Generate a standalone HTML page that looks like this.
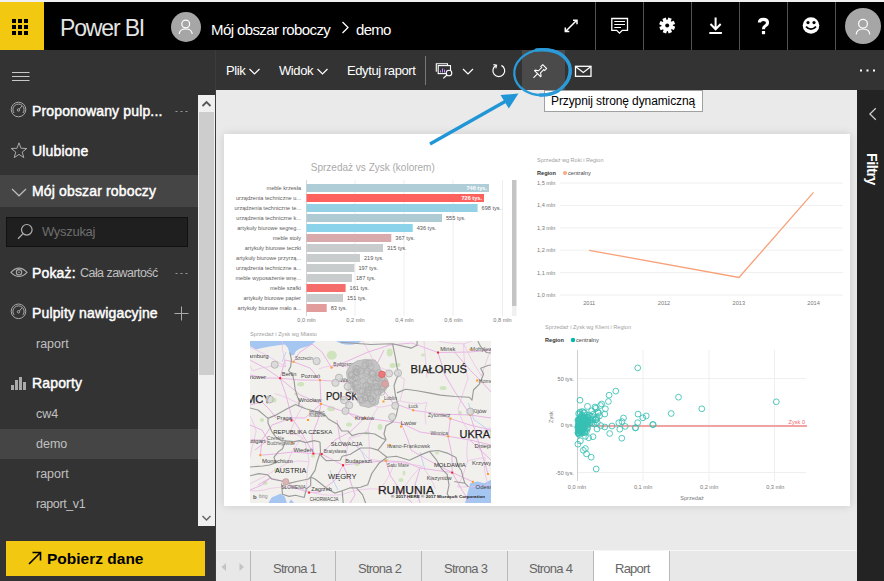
<!DOCTYPE html>
<html><head><meta charset="utf-8">
<style>
*{margin:0;padding:0;box-sizing:border-box}
html,body{width:884px;height:581px;overflow:hidden;background:#eaeaea;font-family:"Liberation Sans",sans-serif}
.a{position:absolute}
.t{position:absolute;white-space:nowrap}
.sq{position:absolute;width:4px;height:4px;background:#000}
.sep{position:absolute;top:2px;width:1px;height:48px;background:#505050}
.side-t{color:#fff;font-size:14px;line-height:16px;letter-spacing:0.15px;-webkit-text-stroke:0.45px #fff}
.sub-t{color:#c0c0c0;font-size:12.5px;line-height:14px}
.tb-t{color:#fff;font-size:13px;line-height:16px;letter-spacing:-0.4px}
.tab-t{color:#666;font-size:13px;line-height:16px;letter-spacing:-0.75px}
svg{position:absolute;left:0;top:0}
</style></head><body>
<div class="a" style="left:0;top:0;width:884px;height:2px;background:#f0f0f0"></div>
<div class="a" style="left:0;top:2px;width:884px;height:48px;background:#000"></div>
<div class="a" style="left:0;top:2px;width:44px;height:48px;background:#f2c811"></div>
<div class="sq" style="left:12px;top:19px"></div>
<div class="sq" style="left:18px;top:19px"></div>
<div class="sq" style="left:24px;top:19px"></div>
<div class="sq" style="left:12px;top:25px"></div>
<div class="sq" style="left:18px;top:25px"></div>
<div class="sq" style="left:24px;top:25px"></div>
<div class="sq" style="left:12px;top:31px"></div>
<div class="sq" style="left:18px;top:31px"></div>
<div class="sq" style="left:24px;top:31px"></div>
<div class="t" style="left:60px;top:14px;color:#e4e4e4;font-size:23px;line-height:28px;letter-spacing:-1.15px">Power BI</div>
<div class="a" style="left:171px;top:12px;width:30px;height:30px;border-radius:50%;background:#a6a6a6"></div>
<div class="t" style="left:211px;top:20.5px;color:#fff;font-size:15px;line-height:18px;letter-spacing:-0.6px">Mój obszar roboczy</div>
<div class="t" style="left:356px;top:20.5px;color:#fff;font-size:15px;line-height:18px;letter-spacing:-0.7px">demo</div>
<div class="sep" style="left:595px"></div>
<div class="sep" style="left:643px"></div>
<div class="sep" style="left:691px"></div>
<div class="sep" style="left:739px"></div>
<div class="sep" style="left:787px"></div>
<div class="sep" style="left:835px"></div>
<div class="a" style="left:845px;top:8px;width:36px;height:36px;border-radius:50%;background:#a6a6a6"></div>
<div class="a" style="left:0;top:50px;width:216px;height:531px;background:#333"></div>
<div class="a" style="left:216px;top:50px;width:668px;height:40px;background:#333"></div>
<div class="a" style="left:215px;top:50px;width:1px;height:531px;background:#3c3c3c"></div>
<div class="a" style="left:857px;top:90px;width:27px;height:491px;background:#232323"></div>
<div class="a" style="left:216px;top:550px;width:641px;height:31px;background:#e8e8e8;border-top:1px solid #f6f6f6"></div>
<div class="a" style="left:224px;top:134px;width:626px;height:372px;background:#fff;box-shadow:0 0 9px rgba(0,0,0,.13)"></div>
<div class="a" style="left:0;top:175px;width:198px;height:32px;background:#454545"></div>
<div class="a" style="left:0;top:429px;width:198px;height:30px;background:#454545"></div>
<div class="t side-t" style="left:32px;top:103px">Proponowany pulp...</div>
<div class="t side-t" style="left:32px;top:143px">Ulubione</div>
<div class="t side-t" style="left:32px;top:183px">Mój obszar roboczy</div>
<div class="a" style="left:6px;top:217px;width:182px;height:30px;background:#1f1f1f;border:1px solid #111"></div>
<div class="t" style="left:42px;top:224px;color:#6e6e6e;font-size:13px;line-height:16px;letter-spacing:-0.3px">Wyszukaj</div>
<div class="t side-t" style="left:32px;top:265px">Pokaż:</div>
<div class="t sub-t" style="left:80px;top:266px;letter-spacing:-0.55px">Cała zawartość</div>
<div class="t side-t" style="left:32px;top:305px">Pulpity nawigacyjne</div>
<div class="t sub-t" style="left:36px;top:337px">raport</div>
<div class="t side-t" style="left:32px;top:375px">Raporty</div>
<div class="t sub-t" style="left:36px;top:407px">cw4</div>
<div class="t sub-t" style="left:36px;top:437px">demo</div>
<div class="t sub-t" style="left:36px;top:467px">raport</div>
<div class="t sub-t" style="left:36px;top:497px;letter-spacing:-0.4px">raport_v1</div>
<div class="a" style="left:198px;top:95px;width:17px;height:431px;background:#f0f0f0"></div>
<div class="a" style="left:199px;top:112px;width:15px;height:263px;background:#cdcdcd"></div>
<div class="a" style="left:6px;top:541px;width:199px;height:35px;background:#f2c811"></div>
<div class="t" style="left:47px;top:550px;color:#000;font-weight:bold;font-size:15.5px;line-height:18px">Pobierz dane</div>
<div class="t tb-t" style="left:226px;top:63px">Plik</div>
<div class="t tb-t" style="left:279px;top:63px">Widok</div>
<div class="t tb-t" style="left:347px;top:63px">Edytuj raport</div>
<div class="a" style="left:425px;top:56px;width:1px;height:29px;background:#777"></div>
<div class="a" style="left:522px;top:50px;width:43px;height:40px;background:#4a4a4a"></div>
<div class="a" style="left:594px;top:551px;width:75px;height:30px;background:#fff"></div>
<div class="a" style="left:250px;top:551px;width:1px;height:30px;background:#b8b8b8"></div>
<div class="a" style="left:335px;top:551px;width:1px;height:30px;background:#b8b8b8"></div>
<div class="a" style="left:421px;top:551px;width:1px;height:30px;background:#b8b8b8"></div>
<div class="a" style="left:507px;top:551px;width:1px;height:30px;background:#b8b8b8"></div>
<div class="a" style="left:593px;top:551px;width:1px;height:30px;background:#b8b8b8"></div>
<div class="a" style="left:669px;top:551px;width:1px;height:30px;background:#b8b8b8"></div>
<div class="t tab-t" style="left:273px;top:560.5px">Strona 1</div>
<div class="t tab-t" style="left:358px;top:560.5px">Strona 2</div>
<div class="t tab-t" style="left:444px;top:560.5px">Strona 3</div>
<div class="t tab-t" style="left:529px;top:560.5px">Strona 4</div>
<div class="t tab-t" style="left:615px;top:560.5px">Raport</div>
<div class="a" style="left:544px;top:89.5px;width:159px;height:22px;background:#fff;border:1px solid #a0a0a0"></div>
<div class="t" style="left:551px;top:94px;color:#000;font-size:12px;line-height:14px;letter-spacing:-0.1px">Przypnij stronę dynamiczną</div>
<div class="t" style="left:864px;top:153px;color:#fff;font-weight:bold;font-size:14px;line-height:16px;letter-spacing:-0.4px;transform-origin:0 0;transform:translate(16px,0) rotate(90deg)">Filtry</div>
<svg width="884" height="581" viewBox="0 0 884 581" font-family="Liberation Sans"><circle cx="185.7" cy="24" r="3.9" fill="none" stroke="#fff" stroke-width="1.2"/><path d="M179.2 34 Q179.5 29 185.7 29 Q191.9 29 192.2 34" fill="none" stroke="#fff" stroke-width="1.2"/><path d="M342.5 22 L348 27.5 L342.5 33" fill="none" stroke="#fff" stroke-width="1.3"/><path d="M565.5 31.5 L577 20 M573 20.2 H577 V24.2 M565.3 27.6 V31.6 H569.3" fill="none" stroke="#fff" stroke-width="1.5"/><path d="M611.8 18.5 H627.5 V30.3 H622.3 L619.5 33.1 L616.7 30.3 H611.8 Z" fill="none" stroke="#fff" stroke-width="1.3"/><path d="M614.3 21.5 H625 M614.3 24.5 H625 M614.3 27.5 H621" stroke="#fff" stroke-width="1.1"/><rect x="665.2" y="17.6" width="3.6" height="3.5" fill="#fff" transform="rotate(22.5 667.2 25.5)"/><rect x="665.2" y="17.6" width="3.6" height="3.5" fill="#fff" transform="rotate(67.5 667.2 25.5)"/><rect x="665.2" y="17.6" width="3.6" height="3.5" fill="#fff" transform="rotate(112.5 667.2 25.5)"/><rect x="665.2" y="17.6" width="3.6" height="3.5" fill="#fff" transform="rotate(157.5 667.2 25.5)"/><rect x="665.2" y="17.6" width="3.6" height="3.5" fill="#fff" transform="rotate(202.5 667.2 25.5)"/><rect x="665.2" y="17.6" width="3.6" height="3.5" fill="#fff" transform="rotate(247.5 667.2 25.5)"/><rect x="665.2" y="17.6" width="3.6" height="3.5" fill="#fff" transform="rotate(292.5 667.2 25.5)"/><rect x="665.2" y="17.6" width="3.6" height="3.5" fill="#fff" transform="rotate(337.5 667.2 25.5)"/><circle cx="667.2" cy="25.5" r="5.6" fill="#fff"/><circle cx="667.2" cy="25.5" r="2" fill="#000"/><path d="M715.6 17.5 V29 M710.5 24 L715.6 29.2 L720.7 24" fill="none" stroke="#fff" stroke-width="2"/><rect x="709.3" y="32" width="12.6" height="2" fill="#fff"/><path d="M759.4 22.6 Q759.4 19.4 763.4 19.4 Q767.5 19.4 767.5 22.6 Q767.5 24.8 765.2 26 Q763.5 26.9 763.5 29.3" fill="none" stroke="#fff" stroke-width="3.1"/><rect x="761.9" y="31" width="3.2" height="3.2" fill="#fff"/><circle cx="811" cy="25.5" r="8.3" fill="#fff"/><circle cx="808" cy="22.6" r="1.6" fill="#000"/><circle cx="814" cy="22.6" r="1.6" fill="#000"/><path d="M806 26.6 Q811 31.8 816 26.6" fill="none" stroke="#000" stroke-width="1.7"/><circle cx="863" cy="23.8" r="4.4" fill="none" stroke="#fff" stroke-width="1.2"/><path d="M856.2 34.5 Q856.5 29 863 29 Q869.5 29 869.8 34.5" fill="none" stroke="#fff" stroke-width="1.2"/><line x1="12" y1="72.5" x2="29.5" y2="72.5" stroke="#c8c8c8" stroke-width="1"/><line x1="12" y1="76.5" x2="29.5" y2="76.5" stroke="#c8c8c8" stroke-width="1"/><line x1="12" y1="80.5" x2="29.5" y2="80.5" stroke="#c8c8c8" stroke-width="1"/><circle cx="18.5" cy="109.5" r="7.3" fill="none" stroke="#aaa" stroke-width="1"/><path d="M14.0 113.0 A5.6 5.6 0 1 1 23.0 113.0" fill="none" stroke="#aaa" stroke-width="1"/><circle cx="18.5" cy="110.0" r="1.2" fill="none" stroke="#aaa" stroke-width="1"/><line x1="19.3" y1="109.2" x2="22.0" y2="106.0" stroke="#aaa" stroke-width="1"/><circle cx="18.5" cy="311.3" r="7.3" fill="none" stroke="#aaa" stroke-width="1"/><path d="M14.0 314.8 A5.6 5.6 0 1 1 23.0 314.8" fill="none" stroke="#aaa" stroke-width="1"/><circle cx="18.5" cy="311.8" r="1.2" fill="none" stroke="#aaa" stroke-width="1"/><line x1="19.3" y1="311.0" x2="22.0" y2="307.8" stroke="#aaa" stroke-width="1"/><rect x="175.5" y="111.0" width="2" height="1" fill="#999"/><rect x="180.5" y="111.0" width="2" height="1" fill="#999"/><rect x="185.5" y="111.0" width="2" height="1" fill="#999"/><rect x="175.5" y="273.0" width="2" height="1" fill="#999"/><rect x="180.5" y="273.0" width="2" height="1" fill="#999"/><rect x="185.5" y="273.0" width="2" height="1" fill="#999"/><polygon points="19.00,142.80 21.00,148.25 26.80,148.47 22.23,152.05 23.82,157.63 19.00,154.40 14.18,157.63 15.77,152.05 11.20,148.47 17.00,148.25" fill="none" stroke="#aaa" stroke-width="1"/><path d="M12 189 L19 195.8 L26 189" fill="none" stroke="#bbb" stroke-width="1.2"/><circle cx="26.8" cy="229.8" r="5.3" fill="none" stroke="#b0b0b0" stroke-width="1.2"/><line x1="23" y1="233.6" x2="18" y2="238.8" stroke="#b0b0b0" stroke-width="1.3"/><path d="M11 272.3 Q19 264 27 272.3 Q19 280.6 11 272.3 Z" fill="none" stroke="#aaa" stroke-width="1.2"/><circle cx="19" cy="272.3" r="2.7" fill="none" stroke="#aaa" stroke-width="1.1"/><circle cx="19" cy="272.3" r="0.8" fill="#aaa"/><path d="M174.5 313.5 H188.5 M181.5 306.5 V320.5" stroke="#aaa" stroke-width="1"/><rect x="11" y="385" width="3" height="5" fill="#aaa"/><rect x="15" y="380" width="3" height="10" fill="#aaa"/><rect x="19" y="377" width="3" height="13" fill="#aaa"/><rect x="23" y="382" width="3" height="8" fill="#aaa"/><path d="M202.5 106 L206.5 102 L210.5 106" fill="none" stroke="#555" stroke-width="1.8"/><path d="M202.5 516 L206.5 520 L210.5 516" fill="none" stroke="#666" stroke-width="1.5"/><path d="M29 564 L40.5 552.5 M32.5 552.5 H40.5 V560.5" fill="none" stroke="#000" stroke-width="1.6"/><path d="M249.5 69 L254.5 74 L259.5 69" fill="none" stroke="#fff" stroke-width="1.2"/><path d="M317.5 69 L322.5 74 L327.5 69" fill="none" stroke="#fff" stroke-width="1.2"/><path d="M463 69 L468 74 L473 69" fill="none" stroke="#fff" stroke-width="1.2"/><path d="M436.3 71.8 V63.8 H447.5 V65.3" fill="none" stroke="#fff" stroke-width="1.1"/><rect x="438.2" y="65.6" width="12.3" height="8" fill="none" stroke="#fff" stroke-width="1.1"/><path d="M440.5 72.5 V70.5 M442.5 72.5 V68.5 M444.5 72.5 V69.5" stroke="#c58cff" stroke-width="1"/><circle cx="449" cy="73" r="2.8" fill="#333" stroke="#fff" stroke-width="1.1"/><line x1="447" y1="75" x2="443.3" y2="78.4" stroke="#fff" stroke-width="1.2"/><path d="M496.2 65.4 A5.9 5.9 0 1 0 501.4 65.4" fill="none" stroke="#fff" stroke-width="1.2"/><path d="M493.4 64.6 L496.6 65.2 L495.8 68.4" fill="none" stroke="#fff" stroke-width="1.1"/><g transform="translate(539.3 72) rotate(45) scale(0.92)"><path d="M-3 -8.3 H3 V-5.3 H1.6 V-0.3 L4.6 1.8 V2.6 H-4.6 V1.8 L-1.6 -0.3 V-5.3 H-3 Z" fill="none" stroke="#fff" stroke-width="1.15"/><line x1="0" y1="2.6" x2="0" y2="9" stroke="#fff" stroke-width="1.2"/></g><rect x="575.5" y="66.3" width="15.5" height="10" fill="none" stroke="#fff" stroke-width="1.3"/><path d="M575.5 66.5 L583.25 72.5 L591 66.5" fill="none" stroke="#fff" stroke-width="1.2"/><rect x="860" y="69.5" width="2" height="2" fill="#fff"/><rect x="866.5" y="69.5" width="2" height="2" fill="#fff"/><rect x="873" y="69.5" width="2" height="2" fill="#fff"/><path d="M875.8 108.3 L869.9 114 L875.8 119.7" fill="none" stroke="#ccc" stroke-width="1.3"/><path d="M226 563 L221.5 567 L226 571 Z" fill="#c4c4c4"/><path d="M239.5 563 L244 567 L239.5 571 Z" fill="#c4c4c4"/><text x="310.8" y="171" font-size="10.5" fill="#aaaaaa" textLength="124" lengthAdjust="spacingAndGlyphs">Sprzedaż vs Zysk (kolorem)</text><line x1="355" y1="180" x2="355" y2="316" stroke="#eeeeee" stroke-width="1"/><line x1="404" y1="180" x2="404" y2="316" stroke="#eeeeee" stroke-width="1"/><line x1="453" y1="180" x2="453" y2="316" stroke="#eeeeee" stroke-width="1"/><line x1="502.5" y1="180" x2="502.5" y2="316" stroke="#eeeeee" stroke-width="1"/><line x1="306.5" y1="180" x2="306.5" y2="316" stroke="#d6d6d6" stroke-width="1"/><rect x="306.5" y="184" width="182.5" height="8" fill="#aecdd7"/><text x="301" y="190" text-anchor="end" font-size="5.6" fill="#5c5c5c">meble krzesła</text><text x="487" y="190" text-anchor="end" font-size="5.6" fill="#fff" font-weight="bold">746 tys.</text><rect x="306.5" y="194" width="177.5" height="8" fill="#fd625e"/><text x="301" y="200" text-anchor="end" font-size="5.6" fill="#5c5c5c">urządzenia techniczne u...</text><text x="482" y="200" text-anchor="end" font-size="5.6" fill="#fff" font-weight="bold">726 tys.</text><rect x="306.5" y="204" width="171.1" height="8" fill="#95d1e5"/><text x="301" y="210" text-anchor="end" font-size="5.6" fill="#5c5c5c">urządzenia techniczne te...</text><text x="481.6" y="210" font-size="5.6" fill="#555">698 tys.</text><rect x="306.5" y="214" width="135.5" height="8" fill="#aecbd4"/><text x="301" y="220" text-anchor="end" font-size="5.6" fill="#5c5c5c">urządzenia techniczne k...</text><text x="446" y="220" font-size="5.6" fill="#555">555 tys.</text><rect x="306.5" y="224" width="106.2" height="8" fill="#8ad3eb"/><text x="301" y="230" text-anchor="end" font-size="5.6" fill="#5c5c5c">artykuły biurowe segreg...</text><text x="416.7" y="230" font-size="5.6" fill="#555">436 tys.</text><rect x="306.5" y="234" width="84.8" height="8" fill="#d9aaab"/><text x="301" y="240" text-anchor="end" font-size="5.6" fill="#5c5c5c">meble stoły</text><text x="395.3" y="240" font-size="5.6" fill="#555">367 tys.</text><rect x="306.5" y="244" width="76.5" height="8" fill="#c8cccd"/><text x="301" y="250" text-anchor="end" font-size="5.6" fill="#5c5c5c">artykuły biurowe teczki</text><text x="387" y="250" font-size="5.6" fill="#555">315 tys.</text><rect x="306.5" y="254" width="53.5" height="8" fill="#c8cccd"/><text x="301" y="260" text-anchor="end" font-size="5.6" fill="#5c5c5c">artykuły biurowe przyrzą...</text><text x="364" y="260" font-size="5.6" fill="#555">219 tys.</text><rect x="306.5" y="264" width="47.9" height="8" fill="#c8cccd"/><text x="301" y="270" text-anchor="end" font-size="5.6" fill="#5c5c5c">urządzenia techniczne a...</text><text x="358.4" y="270" font-size="5.6" fill="#555">197 tys.</text><rect x="306.5" y="274" width="45.5" height="8" fill="#c8cccd"/><text x="301" y="280" text-anchor="end" font-size="5.6" fill="#5c5c5c">meble wyposażenie wnę...</text><text x="356" y="280" font-size="5.6" fill="#555">187 tys.</text><rect x="306.5" y="284" width="39.1" height="8" fill="#f56d6a"/><text x="301" y="290" text-anchor="end" font-size="5.6" fill="#5c5c5c">meble szafki</text><text x="349.6" y="290" font-size="5.6" fill="#555">161 tys.</text><rect x="306.5" y="294" width="36.5" height="8" fill="#c8cccd"/><text x="301" y="300" text-anchor="end" font-size="5.6" fill="#5c5c5c">artykuły biurowe papier</text><text x="347" y="300" font-size="5.6" fill="#555">151 tys.</text><rect x="306.5" y="304" width="20.2" height="8" fill="#e39c9c"/><text x="301" y="310" text-anchor="end" font-size="5.6" fill="#5c5c5c">artykuły biurowe mało a...</text><text x="330.7" y="310" font-size="5.6" fill="#555">83 tys.</text><text x="306.5" y="322" text-anchor="middle" font-size="5.6" fill="#777">0,0 mln</text><text x="355.5" y="322" text-anchor="middle" font-size="5.6" fill="#777">0,2 mln</text><text x="404.5" y="322" text-anchor="middle" font-size="5.6" fill="#777">0,4 mln</text><text x="453.5" y="322" text-anchor="middle" font-size="5.6" fill="#777">0,6 mln</text><text x="502.5" y="322" text-anchor="middle" font-size="5.6" fill="#777">0,8 mln</text><rect x="512" y="180" width="4.5" height="126" fill="#c4c4c4"/><rect x="512" y="306" width="4.5" height="10" fill="#f0f0f0"/><text x="537" y="162" font-size="6" fill="#a0a0a0" textLength="66.5" lengthAdjust="spacingAndGlyphs">Sprzedaż wg Roki i Region</text><text x="537" y="175" font-size="5.6" fill="#333" font-weight="bold">Region</text><circle cx="565" cy="173" r="2" fill="#f7a983"/><text x="568" y="175" font-size="5.6" fill="#444">centralny</text><line x1="560" y1="183.0" x2="843" y2="183.0" stroke="#efefef" stroke-width="1"/><text x="537" y="185.0" font-size="5.6" fill="#777">1,5 mln</text><line x1="560" y1="205.4" x2="843" y2="205.4" stroke="#efefef" stroke-width="1"/><text x="537" y="207.4" font-size="5.6" fill="#777">1,4 mln</text><line x1="560" y1="227.8" x2="843" y2="227.8" stroke="#efefef" stroke-width="1"/><text x="537" y="229.8" font-size="5.6" fill="#777">1,3 mln</text><line x1="560" y1="250.2" x2="843" y2="250.2" stroke="#efefef" stroke-width="1"/><text x="537" y="252.2" font-size="5.6" fill="#777">1,2 mln</text><line x1="560" y1="272.6" x2="843" y2="272.6" stroke="#efefef" stroke-width="1"/><text x="537" y="274.6" font-size="5.6" fill="#777">1,1 mln</text><line x1="560" y1="295.0" x2="843" y2="295.0" stroke="#efefef" stroke-width="1"/><text x="537" y="297.0" font-size="5.6" fill="#777">1,0 mln</text><text x="589.2" y="305" text-anchor="middle" font-size="5.6" fill="#777">2011</text><text x="664.0" y="305" text-anchor="middle" font-size="5.6" fill="#777">2012</text><text x="738.8" y="305" text-anchor="middle" font-size="5.6" fill="#777">2013</text><text x="813.6" y="305" text-anchor="middle" font-size="5.6" fill="#777">2014</text><polyline points="589.2,250.3 739,277.5 813.5,192.4" fill="none" stroke="#f7a17a" stroke-width="1.3"/><text x="545" y="329" font-size="6" fill="#a0a0a0" textLength="86" lengthAdjust="spacingAndGlyphs">Sprzedaż i Zysk wg Klient i Region</text><text x="545" y="342" font-size="5.6" fill="#333" font-weight="bold">Region</text><circle cx="573" cy="340" r="2.2" fill="#01b8aa"/><text x="576" y="342" font-size="5.6" fill="#444">centralny</text><line x1="577" y1="378.5" x2="806" y2="378.5" stroke="#efefef" stroke-width="1"/><line x1="577" y1="425.3" x2="806" y2="425.3" stroke="#efefef" stroke-width="1"/><line x1="577" y1="472.5" x2="806" y2="472.5" stroke="#efefef" stroke-width="1"/><line x1="643" y1="350" x2="643" y2="481" stroke="#efefef" stroke-width="1"/><line x1="709" y1="350" x2="709" y2="481" stroke="#efefef" stroke-width="1"/><line x1="774.5" y1="350" x2="774.5" y2="481" stroke="#efefef" stroke-width="1"/><line x1="577.5" y1="350" x2="577.5" y2="481" stroke="#cfcfcf" stroke-width="1"/><text x="574" y="380.5" text-anchor="end" font-size="5.6" fill="#777">50 tys.</text><text x="574" y="427.3" text-anchor="end" font-size="5.6" fill="#777">0 tys.</text><text x="574" y="474.5" text-anchor="end" font-size="5.6" fill="#777">-50 tys.</text><text x="577.0" y="488.5" text-anchor="middle" font-size="5.6" fill="#777">0,0 mln</text><text x="643.1" y="488.5" text-anchor="middle" font-size="5.6" fill="#777">0,1 mln</text><text x="709.2" y="488.5" text-anchor="middle" font-size="5.6" fill="#777">0,2 mln</text><text x="775.3" y="488.5" text-anchor="middle" font-size="5.6" fill="#777">0,3 mln</text><text x="692" y="499.5" text-anchor="middle" font-size="5.6" fill="#777">Sprzedaż</text><text transform="translate(553,417) rotate(-90)" text-anchor="middle" font-size="5.6" fill="#777">Zysk</text><line x1="577" y1="426" x2="807" y2="426" stroke="#efa3a3" stroke-width="1.8"/><text x="805" y="423.8" text-anchor="end" font-size="5.6" fill="#f06a6a">Zysk 0</text><g fill="none" stroke="#36bfb4" stroke-width="0.85"><circle cx="637.7" cy="367.9" r="2.9"/><circle cx="615.8" cy="391.1" r="2.9"/><circle cx="609.1" cy="395.2" r="2.9"/><circle cx="608.4" cy="401.5" r="2.9"/><circle cx="580" cy="400.2" r="2.9"/><circle cx="601.6" cy="404" r="2.9"/><circle cx="600.5" cy="405.5" r="2.9"/><circle cx="605.4" cy="408.8" r="2.9"/><circle cx="604.8" cy="414" r="2.9"/><circle cx="595" cy="407" r="2.9"/><circle cx="598" cy="412" r="2.9"/><circle cx="580" cy="412" r="2.9"/><circle cx="638" cy="414.1" r="2.9"/><circle cx="646.3" cy="415.9" r="2.9"/><circle cx="642.8" cy="417.8" r="2.9"/><circle cx="623.5" cy="418" r="2.9"/><circle cx="637.7" cy="422.7" r="2.9"/><circle cx="652.7" cy="424.5" r="2.9"/><circle cx="635.5" cy="427.7" r="2.9"/><circle cx="625.2" cy="426.4" r="2.9"/><circle cx="619.8" cy="429.2" r="2.9"/><circle cx="618.8" cy="422.7" r="2.9"/><circle cx="622" cy="421.6" r="2.9"/><circle cx="612" cy="426" r="2.9"/><circle cx="604.8" cy="427" r="2.9"/><circle cx="597" cy="429" r="2.9"/><circle cx="609.7" cy="433.5" r="2.9"/><circle cx="621.8" cy="438.2" r="2.9"/><circle cx="593" cy="436.7" r="2.9"/><circle cx="588.7" cy="437.8" r="2.9"/><circle cx="585.4" cy="436.3" r="2.9"/><circle cx="577.9" cy="444.2" r="2.9"/><circle cx="585.4" cy="448.5" r="2.9"/><circle cx="583.3" cy="450.3" r="2.9"/><circle cx="586.5" cy="453.9" r="2.9"/><circle cx="591.2" cy="457.2" r="2.9"/><circle cx="596.2" cy="469" r="2.9"/><circle cx="678.5" cy="397.2" r="2.9"/><circle cx="671.2" cy="413.5" r="2.9"/><circle cx="701.8" cy="408.8" r="2.9"/><circle cx="776.3" cy="401.8" r="2.9"/><circle cx="653.2" cy="424.6" r="2.9"/><circle cx="635.5" cy="427.9" r="2.9"/><circle cx="590" cy="420" r="2.9"/><circle cx="594" cy="424" r="2.9"/><circle cx="579.3" cy="429.5" r="3"/><circle cx="583.6" cy="428.8" r="3"/><circle cx="583.6" cy="429.4" r="3"/><circle cx="579.7" cy="427.8" r="3"/><circle cx="586.3" cy="431.4" r="3"/><circle cx="579.2" cy="434.5" r="3"/><circle cx="582.4" cy="421.2" r="3"/><circle cx="587.5" cy="428.5" r="3"/><circle cx="579.5" cy="429.0" r="3"/><circle cx="579.3" cy="423.0" r="3"/><circle cx="581.1" cy="421.4" r="3"/><circle cx="579.6" cy="427.6" r="3"/><circle cx="580.2" cy="420.8" r="3"/><circle cx="582.7" cy="422.6" r="3"/><circle cx="580.1" cy="417.7" r="3"/><circle cx="583.4" cy="420.4" r="3"/><circle cx="578.5" cy="421.7" r="3"/><circle cx="581.8" cy="429.2" r="3"/><circle cx="581.3" cy="432.6" r="3"/><circle cx="582.2" cy="416.4" r="3"/><circle cx="581.1" cy="421.8" r="3"/><circle cx="583.5" cy="420.8" r="3"/><circle cx="584.4" cy="412.7" r="3"/><circle cx="578.9" cy="424.7" r="3"/><circle cx="587.5" cy="406.4" r="3"/><circle cx="579.1" cy="432.3" r="3"/><circle cx="583.5" cy="427.3" r="3"/><circle cx="579.3" cy="427.7" r="3"/><circle cx="580.6" cy="429.6" r="3"/><circle cx="579.4" cy="424.8" r="3"/><circle cx="587.9" cy="417.5" r="3"/><circle cx="580.7" cy="422.6" r="3"/><circle cx="584.6" cy="432.3" r="3"/><circle cx="579.8" cy="429.7" r="3"/><circle cx="578.6" cy="433.6" r="3"/><circle cx="578.0" cy="427.5" r="3"/><circle cx="582.4" cy="429.7" r="3"/><circle cx="580.2" cy="419.3" r="3"/><circle cx="578.7" cy="424.7" r="3"/><circle cx="579.9" cy="413.9" r="3"/><circle cx="581.9" cy="430.5" r="3"/><circle cx="579.2" cy="425.3" r="3"/><circle cx="578.8" cy="430.3" r="3"/><circle cx="578.1" cy="427.0" r="3"/><circle cx="581.8" cy="430.3" r="3"/><circle cx="582.9" cy="420.6" r="3"/><circle cx="578.1" cy="432.5" r="3"/><circle cx="585.0" cy="430.3" r="3"/><circle cx="583.6" cy="428.1" r="3"/><circle cx="581.7" cy="429.6" r="3"/><circle cx="579.4" cy="423.8" r="3"/><circle cx="583.8" cy="424.2" r="3"/><circle cx="579.1" cy="426.2" r="3"/><circle cx="587.9" cy="420.6" r="3"/><circle cx="578.3" cy="432.7" r="3"/><circle cx="578.8" cy="419.2" r="3"/><circle cx="579.7" cy="429.8" r="3"/><circle cx="587.7" cy="420.4" r="3"/><circle cx="581.4" cy="417.5" r="3"/><circle cx="582.7" cy="426.3" r="3"/><circle cx="582.0" cy="427.1" r="3"/><circle cx="582.4" cy="411.6" r="3"/><circle cx="591.7" cy="410.9" r="3"/><circle cx="580.3" cy="429.8" r="3"/><circle cx="579.1" cy="430.3" r="3"/><circle cx="585.8" cy="417.7" r="3"/><circle cx="583.1" cy="417.9" r="3"/><circle cx="583.8" cy="412.7" r="3"/><circle cx="578.0" cy="420.2" r="3"/><circle cx="579.1" cy="421.2" r="3"/><circle cx="582.9" cy="424.5" r="3"/><circle cx="585.6" cy="422.9" r="3"/><circle cx="580.0" cy="428.2" r="3"/><circle cx="579.0" cy="423.3" r="3"/><circle cx="585.3" cy="424.1" r="3"/><circle cx="580.5" cy="426.0" r="3"/><circle cx="585.1" cy="422.8" r="3"/><circle cx="582.9" cy="421.4" r="3"/><circle cx="579.6" cy="423.1" r="3"/><circle cx="579.0" cy="430.9" r="3"/><circle cx="578.3" cy="433.2" r="3"/><circle cx="581.9" cy="422.7" r="3"/><circle cx="587.4" cy="417.7" r="3"/><circle cx="583.1" cy="421.6" r="3"/><circle cx="579.0" cy="426.5" r="3"/><circle cx="578.2" cy="427.4" r="3"/><circle cx="580.7" cy="431.7" r="3"/><circle cx="582.2" cy="423.6" r="3"/><circle cx="586.2" cy="422.8" r="3"/><circle cx="581.5" cy="424.6" r="3"/><circle cx="578.8" cy="419.6" r="3"/><circle cx="578.7" cy="413.6" r="3"/><circle cx="582.5" cy="420.8" r="3"/><circle cx="579.9" cy="420.1" r="3"/><circle cx="589.8" cy="423.2" r="3"/><circle cx="586.5" cy="415.4" r="3"/><circle cx="589.2" cy="415.2" r="3"/><circle cx="579.7" cy="428.8" r="3"/><circle cx="581.3" cy="428.8" r="3"/><circle cx="582.2" cy="415.1" r="3"/><circle cx="582.5" cy="432.8" r="3"/><circle cx="584.4" cy="432.4" r="3"/><circle cx="580.3" cy="440.9" r="3"/><circle cx="593.1" cy="419.7" r="3"/><circle cx="580.8" cy="431.4" r="3"/><circle cx="579.8" cy="430.0" r="3"/><circle cx="578.2" cy="425.8" r="3"/><circle cx="578.9" cy="427.2" r="3"/><circle cx="582.3" cy="421.8" r="3"/><circle cx="586.8" cy="420.0" r="3"/><circle cx="584.1" cy="427.9" r="3"/><circle cx="587.4" cy="425.1" r="3"/><circle cx="590.4" cy="416.7" r="3"/><circle cx="585.0" cy="418.1" r="3"/><circle cx="593.4" cy="417.1" r="3"/><circle cx="595.8" cy="419.4" r="3"/><circle cx="583.4" cy="417.9" r="3"/><circle cx="583.7" cy="417.8" r="3"/><circle cx="583.3" cy="419.1" r="3"/><circle cx="593.1" cy="414.5" r="3"/><circle cx="587.4" cy="422.2" r="3"/><circle cx="584.2" cy="423.9" r="3"/><circle cx="583.0" cy="423.4" r="3"/><circle cx="597.2" cy="422.5" r="3"/><circle cx="592.0" cy="422.7" r="3"/><circle cx="587.0" cy="425.3" r="3"/><circle cx="596.7" cy="417.8" r="3"/><circle cx="600.7" cy="425.7" r="3"/><circle cx="598.4" cy="413.2" r="3"/><circle cx="589.9" cy="420.3" r="3"/><circle cx="595.8" cy="408.4" r="3"/><circle cx="596.1" cy="419.7" r="3"/><circle cx="590.1" cy="422.9" r="3"/><circle cx="583.4" cy="422.2" r="3"/><circle cx="587.1" cy="427.9" r="3"/><circle cx="599.4" cy="415.9" r="3"/><circle cx="587.6" cy="422.4" r="3"/><circle cx="585.2" cy="425.1" r="3"/></g><text x="250" y="336" font-size="6" fill="#a0a0a0" textLength="67" lengthAdjust="spacingAndGlyphs">Sprzedaż i Zysk wg Miasto</text><svg x="250" y="341" width="241" height="162" viewBox="250 341 241 162"><rect x="250" y="341" width="241" height="162" fill="#f1f0ec"/><path d="M250 341 H316 L310 345.5 L300 348.5 L296 351 L294 355 L290 355.6 L288 348 L285 344.5 L280 345 L270 346.5 L262 348 L256 349.5 L250 346 Z" fill="#a6c6f2"/><path d="M336 341 H362 Q357 344.5 349 344.8 Q341 344.5 336 341 Z" fill="#a6c6f2"/><path d="M465 503 L470.2 483.2 L477.3 481.5 L484.4 483.2 L491 479.7 V503 Z" fill="#a6c6f2"/><path d="M268.4 503 L271.7 497.5 L280.4 493.7 L284.7 496.4 L286.9 503 Z" fill="#a6c6f2"/><path d="M289 503 L291 499.5 L294 503 Z" fill="#a6c6f2"/><path d="M468.4 403 L473.8 419.5 L486.2 428.3 L491 432" fill="none" stroke="#b8d0f0" stroke-width="0.9"/><path d="M330 470 L333 480 L338 490" fill="none" stroke="#b8d0f0" stroke-width="0.9"/><path d="M355 445 L362 452 L366 462" fill="none" stroke="#b8d0f0" stroke-width="0.9"/><path d="M420 452 L425 470" fill="none" stroke="#b8d0f0" stroke-width="0.9"/><path d="M286 352 L282 362" fill="none" stroke="#b8d0f0" stroke-width="0.9"/><ellipse cx="331.8" cy="355.3" rx="5" ry="4.5" fill="#cfe3bd"/><ellipse cx="300.7" cy="384.2" rx="3.5" ry="2.2" fill="#cfe3bd"/><ellipse cx="331.1" cy="408.8" rx="4" ry="2.5" fill="#cfe3bd"/><ellipse cx="389.7" cy="352.5" rx="3" ry="4" fill="#cfe3bd"/><ellipse cx="392.6" cy="365.5" rx="3" ry="2.5" fill="#cfe3bd"/><ellipse cx="443.1" cy="387.9" rx="3.5" ry="2" fill="#cfe3bd"/><ellipse cx="349" cy="424.5" rx="3" ry="2" fill="#cfe3bd"/><ellipse cx="380" cy="427" rx="2.5" ry="3" fill="#cfe3bd"/><ellipse cx="367" cy="433" rx="3" ry="1.5" fill="#cfe3bd"/><ellipse cx="277" cy="470" rx="3" ry="2" fill="#cfe3bd"/><ellipse cx="265" cy="483" rx="2.5" ry="2" fill="#cfe3bd"/><ellipse cx="357" cy="464" rx="2.5" ry="2" fill="#cfe3bd"/><ellipse cx="386" cy="460" rx="2.5" ry="1.5" fill="#cfe3bd"/><ellipse cx="401" cy="480" rx="2.5" ry="2" fill="#cfe3bd"/><ellipse cx="404" cy="473" rx="1.5" ry="2.5" fill="#cfe3bd"/><ellipse cx="437" cy="453" rx="2" ry="1.5" fill="#cfe3bd"/><ellipse cx="460" cy="413" rx="2" ry="2" fill="#cfe3bd"/><ellipse cx="274" cy="400" rx="2.5" ry="2.5" fill="#cfe3bd"/><ellipse cx="262" cy="420" rx="2" ry="2" fill="#cfe3bd"/><ellipse cx="296" cy="394" rx="2" ry="1.2" fill="#cfe3bd"/><ellipse cx="313" cy="456" rx="2" ry="1.5" fill="#cfe3bd"/><ellipse cx="398" cy="365" rx="2.5" ry="2" fill="#cfe3bd"/><ellipse cx="423" cy="355" rx="2" ry="1.5" fill="#cfe3bd"/><g fill="none" stroke="#e7a9e4" stroke-width="0.85"><path d="M250 360 L265 368 L280.1 378.2 L300 380 L320 380.2 L345 382 L368 381"/><path d="M250 375 L265 378 L280.1 378.2"/><path d="M280.1 378.2 L285 360 L293.5 361.8 L300 352 L312 344"/><path d="M280.1 378.2 L286 395 L291.8 417.9 L300 430 L313.4 453.6"/><path d="M280.1 378.2 L300 395 L321 403.8 L345 412 L364.7 418"/><path d="M293.5 361.8 L310 368 L320 380.2"/><path d="M320 380.2 L321 403.8 L318 420 L312 435 L313.4 453.6"/><path d="M331.5 367.6 L350 360 L368 352 L390 345 L412 343 L438 352.5 L470 352 L491 350"/><path d="M368 381 L385 392 L393 403 L413.2 410.3 L440 414 L470.2 415 L491 418"/><path d="M368 381 L352 395 L345 410 L355 418 L364.7 418 L380 420 L401 423 L420 432 L448.1 436.3 L470 440 L491 445"/><path d="M438 352.5 L445 375 L455 392 L470.2 415"/><path d="M401 423 L408 440 L411 450 L428 460 L452.2 472.6 L472.9 481.8"/><path d="M448.1 436.3 L452 455 L452.2 472.6"/><path d="M450.4 418.6 L448.1 436.3"/><path d="M470.2 415 L478 440 L488 474"/><path d="M291.8 417.9 L305 418 L321 403.8"/><path d="M291.8 417.9 L272 425 L262 440 L260.3 455.2"/><path d="M260.3 455.2 L275 454 L293 452 L313.4 453.6 L321.6 454.1 L343 465.2"/><path d="M343 465.2 L360 463 L385.8 460.8 L405 462 L420 468 L452.2 472.6"/><path d="M343 465.2 L335 480 L320 492 L309.1 492.6"/><path d="M343 465.2 L350 480 L355 495 L350 503"/><path d="M364.7 418 L350 432 L335 440 L321.6 454.1"/><path d="M385.8 460.8 L390 475 L400 490 L412 503"/><path d="M309.1 492.6 L295 488 L285.8 481.8 L270 478 L258 485"/><path d="M250 405 L262 402 L270 410 L276 418"/><path d="M250 425 L262 430 L268 440 L255 450"/><path d="M250 440 L262 440"/><path d="M312 344 L322 352 L331.5 367.6"/><path d="M368 381 L378 362 L384 350"/><path d="M452.2 472.6 L462 490 L470 503"/><path d="M420 468 L415 485 L420 503"/><path d="M491 392 L480.7 380.6 L470 370 L455 352.5"/><path d="M440 414 L450.4 418.6 L470 425 L491 430"/><path d="M470 440 L476 446 L491 460"/><path d="M250 490 L262 485 L270 478"/><path d="M337 420 L340 440 L346 447"/></g><path d="M243.3 344.0 Q246.4 361.3 252.7 370.7 M243.3 344.0 Q264.4 352.9 285.9 366.7 M252.7 370.7 Q271.6 364.0 285.9 366.7 M244.3 405.7 Q253.6 421.4 256.2 431.2 M256.2 431.2 Q252.4 444.8 250.1 456.8 M250.1 456.8 Q245.4 470.6 240.1 488.9 M240.1 488.9 Q257.2 493.1 270.7 488.3 M240.1 488.9 Q264.7 477.3 287.5 462.9 M281.7 334.1 Q281.4 349.5 285.9 366.7 M274.7 393.7 Q284.8 395.8 303.1 406.1 M290.0 434.8 Q295.7 432.7 302.5 437.8 M290.0 434.8 Q292.8 420.8 303.1 406.1 M287.5 462.9 Q298.2 459.5 309.1 461.8 M287.5 462.9 Q291.8 449.1 302.5 437.8 M270.7 488.3 Q289.3 485.0 306.9 490.8 M310.0 334.9 Q325.6 337.0 333.7 333.6 M319.0 368.9 Q332.8 363.5 347.3 366.8 M302.5 437.8 Q307.9 447.4 309.1 461.8 M309.1 461.8 Q306.1 471.7 306.9 490.8 M306.9 490.8 Q322.3 496.7 341.6 494.7 M333.7 333.6 Q348.1 337.6 362.4 340.6 M347.3 366.8 Q362.9 366.6 376.5 366.2 M347.3 366.8 Q351.1 379.6 345.6 396.3 M345.6 396.3 Q362.3 402.4 378.5 407.2 M349.4 437.3 Q361.9 437.8 368.2 428.8 M349.4 437.3 Q345.4 456.2 345.1 465.2 M349.4 437.3 Q355.0 444.0 369.0 459.2 M341.6 494.7 Q362.0 487.1 379.9 489.2 M362.4 340.6 Q375.9 337.7 390.5 334.5 M362.4 340.6 Q368.5 350.7 376.5 366.2 M376.5 366.2 Q389.8 370.0 404.4 378.9 M378.5 407.2 Q392.4 406.3 399.9 400.9 M378.5 407.2 Q370.7 416.9 368.2 428.8 M368.2 428.8 Q369.9 448.6 369.0 459.2 M369.0 459.2 Q381.5 460.9 394.4 462.7 M379.9 489.2 Q394.4 493.9 401.1 493.0 M379.9 489.2 Q389.8 477.6 394.4 462.7 M404.4 378.9 Q404.0 387.3 399.9 400.9 M399.9 400.9 Q414.6 405.0 426.9 402.6 M394.4 462.7 Q406.0 462.5 421.3 466.0 M401.1 493.0 Q407.7 480.0 421.3 466.0 M423.6 335.7 Q441.7 344.2 463.7 343.8 M423.6 335.7 Q424.9 352.9 427.0 377.8 M426.9 402.6 Q423.6 412.0 426.1 424.7 M421.3 466.0 Q430.2 475.1 435.5 489.0 M463.7 343.8 Q463.4 364.5 468.0 378.3 M463.7 343.8 Q482.4 336.7 497.5 335.6 M463.7 343.8 Q470.3 358.6 481.4 375.9 M468.0 378.3 Q462.4 394.8 458.1 408.8 M458.1 408.8 Q460.4 419.5 469.2 432.4 M469.2 432.4 Q465.3 451.3 467.7 460.9 M469.2 432.4 Q486.1 432.5 496.7 423.8 M467.7 460.9 Q471.6 459.3 485.2 457.6 M467.7 460.9 Q463.7 475.9 457.5 487.0 M457.5 487.0 Q468.0 486.8 488.4 485.7 M497.5 335.6 Q487.5 355.3 481.4 375.9 M495.5 400.7 Q492.5 415.2 496.7 423.8 M485.2 457.6 Q482.3 468.6 488.4 485.7" fill="none" stroke="#ecbbe9" stroke-width="0.7"/><g fill="none" stroke="#9b9b9b" stroke-width="1.15" stroke-linejoin="round"><path d="M289.9 352.5 L291.4 359.7 L290.6 366.9 L288.5 370.5 L292.8 375.6 L294.2 381.4 L295 388.6 L297.1 395.8 L299.3 401.6 L298.6 405.9"/><path d="M298.6 405.9 L295.7 404.5 L287 408.8 L276.9 414.6 L268 418.4 L268 423 L271.7 431.3 L275.8 437 L281 440.6 L294.4 441.6 L299.5 440.6 L305.7 442.6 L314 440.6 L320 442"/><path d="M298.6 405.9 L305.8 408.8 L317.4 411.7 L326 416 L328.3 419 L337.5 424.3 L341.7 431 L347.9 431 L352 435.6 L359.2 433.5 L366.4 433 L374.7 434 L382 438.2 L386 439.7"/><path d="M340.5 342.3 L370.8 344.5 L383.9 344 L392.6 343.8 L394 351 L395.5 358.2 L396.9 366.9 L399 374.1 L396.2 379.2 L394 385.7 L395.5 395.8 L398.3 405.9 L396.2 416 L392.6 422 L386 425.8 L384 434 L386 439.7"/><path d="M392.6 343.8 L411.4 348.1 L417.1 345.2 L417.1 341"/><path d="M396.9 392.9 L405.6 389.3 L417.1 390.7 L428.7 392.9 L440.3 395.1 L454.7 396.5 L469.2 397.2 L472 400.1 L473.5 390 L479.3 384.2 L483.6 374.1 L480.7 368.3 L488 365.5 L491 365"/><path d="M477.8 341 L480.7 346.7 L486.5 352.5 L491 353"/><path d="M386 439.7 L380.9 446.4 L377.9 450.1 L387 457.2 L396.2 456.2 L409.4 460.3 L420.6 454.9 L429.5 451.4 L438.3 450.5 L447.2 453.1 L456 457.6 L457.8 465.5 L461.4 470.8 L463.1 477.9 L464.9 483.2 L468.4 486.8"/><path d="M429.5 451.4 L436.6 460.2 L441.9 469.1 L447.2 474.4 L449 485 L447.2 493.9 L450.7 499.2"/><path d="M377.9 450.1 L370.7 448 L360.5 448 L350.4 454.2 L342.2 456.2 L340.2 460.3 L326 460.6 L320.5 455.2"/><path d="M320 442 L320.5 452 L317.2 461.7 L315 470.4 L310.7 476.9 L308.6 479 L297.7 481.2 L289 483.4 L282.5 481.2 L271.7 479 L267.4 474.7 L258.7 473.6 L250 475.8"/><path d="M285.8 440.6 L282.5 448.7 L278.2 451.9 L273.9 457.4 L276 462.8 L269.5 465 L263 466 L250 467"/><path d="M281.5 483.4 L282.5 494.2 L289 496.4 L295.6 495.3 L304.2 497.5 L306.4 488.8 L310.7 485.6 L310.7 476.9"/><path d="M310.7 476.9 L315 479 L326 487.7 L334.6 493.1 L342.2 490.8 L350.4 487.8 L356.5 487.8 L360.5 487.3 L367.7 484.7 L371.8 473.5 L378.9 463.3 L387 457.2"/><path d="M342.2 490.8 L343.2 503"/><path d="M356.5 487.8 L362.6 494.9 L365.6 503"/><path d="M454.3 481.5 L464.9 483.2"/><path d="M250 408 L258 410 L268 418.4"/></g><rect x="279.1" y="377.2" width="2" height="2" fill="#e22"/><rect x="437" y="351.5" width="2" height="2" fill="#e22"/><rect x="312.4" y="452.6" width="2" height="2" fill="#e22"/><rect x="320.6" y="453.1" width="2" height="2" fill="#e22"/><rect x="308.1" y="491.6" width="2" height="2" fill="#e22"/><rect x="342" y="464.2" width="2" height="2" fill="#e22"/><rect x="451.2" y="471.6" width="2" height="2" fill="#e22"/><rect x="290.5" y="419.5" width="2" height="2" fill="#e22"/><rect x="292.5" y="360.8" width="2" height="2" fill="#f92"/><rect x="330.5" y="366.6" width="2" height="2" fill="#f92"/><rect x="319" y="379.2" width="2" height="2" fill="#f92"/><rect x="320" y="402.8" width="2" height="2" fill="#f92"/><rect x="363.7" y="417" width="2" height="2" fill="#f92"/><rect x="382.5" y="400.5" width="2" height="2" fill="#f92"/><rect x="412.2" y="409.3" width="2" height="2" fill="#f92"/><rect x="449.4" y="417.6" width="2" height="2" fill="#f92"/><rect x="469.2" y="414" width="2" height="2" fill="#f92"/><rect x="447.1" y="435.3" width="2" height="2" fill="#f92"/><rect x="400" y="425.5" width="2" height="2" fill="#f92"/><rect x="389" y="444" width="2" height="2" fill="#f92"/><rect x="384.8" y="459.8" width="2" height="2" fill="#f92"/><rect x="259.3" y="454.2" width="2" height="2" fill="#f92"/><rect x="471.9" y="480.8" width="2" height="2" fill="#f92"/><rect x="487" y="473" width="2" height="2" fill="#f92"/><rect x="307" y="419" width="2" height="2" fill="#f92"/><rect x="469.5" y="348.5" width="2" height="2" fill="#f92"/><rect x="476" y="379.5" width="2" height="2" fill="#f92"/><rect x="291" y="442" width="2" height="2" fill="#f92"/><text x="410.6" y="373" font-size="11" fill="#1e1e1e" stroke="#1e1e1e" stroke-width="0.25" textLength="56.4" lengthAdjust="spacingAndGlyphs">BIAŁORUŚ</text><text x="326" y="399.8" font-size="11.2" fill="#1e1e1e" stroke="#1e1e1e" stroke-width="0.25" textLength="31.8" lengthAdjust="spacingAndGlyphs">POLSK</text><text x="246" y="403.3" font-size="11.2" fill="#1e1e1e" stroke="#1e1e1e" stroke-width="0.25">MCY</text><text x="459.6" y="437.7" font-size="11" fill="#1e1e1e" stroke="#1e1e1e" stroke-width="0.25">UKRAINA</text><text x="377.9" y="493.8" font-size="11.3" fill="#1e1e1e" stroke="#1e1e1e" stroke-width="0.25" textLength="56" lengthAdjust="spacingAndGlyphs">RUMUNIA</text><text x="273.2" y="433.5" font-size="6" fill="#333">REPUBLIKA CZESKA</text><text x="330.8" y="446.1" font-size="6" fill="#333" textLength="31.5" lengthAdjust="spacingAndGlyphs">SŁOWACJA</text><text x="275" y="472.9" font-size="7" fill="#2a2a2a" textLength="31.4" lengthAdjust="spacingAndGlyphs">AUSTRIA</text><text x="328" y="478.5" font-size="7.2" fill="#2a2a2a" textLength="28.5" lengthAdjust="spacingAndGlyphs">WĘGRY</text><text x="433.9" y="467.4" font-size="5.8" fill="#333" textLength="31.9" lengthAdjust="spacingAndGlyphs">MOŁDAWIA</text><text x="281.5" y="489.2" font-size="5.2" fill="#444" textLength="24.4" lengthAdjust="spacingAndGlyphs">SŁOWENIA</text><text x="309.7" y="500.6" font-size="5.2" fill="#444" textLength="28.7" lengthAdjust="spacingAndGlyphs">CHORWACJA</text><text x="440.3" y="350.8" font-size="5.8" fill="#444" textLength="15" lengthAdjust="spacingAndGlyphs">Mińsk</text><text x="470.6" y="350.8" font-size="5.5" fill="#555">Mohylew</text><text x="295" y="360" font-size="5.5" fill="#555" textLength="17.7" lengthAdjust="spacingAndGlyphs">Szczecin</text><text x="333.3" y="366" font-size="5.5" fill="#555" textLength="22.4" lengthAdjust="spacingAndGlyphs">Bydgoszcz</text><text x="281.8" y="376.4" font-size="6" fill="#444" textLength="14.7" lengthAdjust="spacingAndGlyphs">Berlin</text><text x="301" y="377.8" font-size="6" fill="#444" textLength="19" lengthAdjust="spacingAndGlyphs">Poznań</text><text x="244" y="357.8" font-size="6" fill="#444">Hamburg</text><text x="242" y="379.3" font-size="6" fill="#444">Hanower</text><text x="298.5" y="401.9" font-size="6" fill="#444" textLength="22.7" lengthAdjust="spacingAndGlyphs">Wrocław</text><text x="339.8" y="382" font-size="6" fill="#444">Wa</text><text x="383.9" y="400" font-size="5.5" fill="#555" textLength="13" lengthAdjust="spacingAndGlyphs">Lublin</text><text x="408.5" y="407.9" font-size="5.5" fill="#555" textLength="9.4" lengthAdjust="spacingAndGlyphs">Łuck</text><text x="428" y="417.4" font-size="5.5" fill="#555" textLength="22.4" lengthAdjust="spacingAndGlyphs">Żytomierz</text><text x="472" y="413.2" font-size="6" fill="#444" textLength="14.5" lengthAdjust="spacingAndGlyphs">Kijów</text><text x="355" y="420" font-size="6" fill="#444" textLength="19.2" lengthAdjust="spacingAndGlyphs">Kraków</text><text x="400.8" y="425.2" font-size="6" fill="#444">Lwów</text><text x="430.4" y="434.8" font-size="5.5" fill="#555" textLength="17.7" lengthAdjust="spacingAndGlyphs">Winnica</text><text x="276.8" y="420" font-size="6" fill="#444" textLength="15" lengthAdjust="spacingAndGlyphs">Praga</text><text x="309.3" y="413.5" font-size="4.8" fill="#666">Hradec</text><text x="309.3" y="417.2" font-size="4.8" fill="#666">Králové</text><text x="267" y="440.3" font-size="4.8" fill="#666">Czeskie</text><text x="267" y="445.3" font-size="4.8" fill="#666">Budziejowice</text><text x="293.4" y="451.8" font-size="6" fill="#444" textLength="19.5" lengthAdjust="spacingAndGlyphs">Wiedeń</text><text x="323.8" y="452.5" font-size="5.5" fill="#555" textLength="22.5" lengthAdjust="spacingAndGlyphs">Bratysława</text><text x="345.3" y="463.2" font-size="6" fill="#444" textLength="26.5" lengthAdjust="spacingAndGlyphs">Budapeszt</text><text x="387" y="448.4" font-size="5.5" fill="#555">Iwano-Frankowsk</text><text x="387" y="466.8" font-size="5.5" fill="#555" textLength="21.9" lengthAdjust="spacingAndGlyphs">Satu Mare</text><text x="426.8" y="479.9" font-size="6" fill="#444" textLength="24.8" lengthAdjust="spacingAndGlyphs">Kiszyniów</text><text x="474.6" y="448.4" font-size="6" fill="#444">Dniepr</text><text x="472" y="464.9" font-size="6" fill="#444">Krzywy</text><text x="475.5" y="488.8" font-size="6" fill="#444">Odessa</text><text x="262" y="462.6" font-size="6" fill="#444" textLength="30.8" lengthAdjust="spacingAndGlyphs">Monachium</text><text x="311.3" y="490.8" font-size="6" fill="#444" textLength="20.6" lengthAdjust="spacingAndGlyphs">Zagrzeb</text><text x="478.5" y="382.6" font-size="5.5" fill="#555">Homel</text><text x="243" y="442.6" font-size="6" fill="#444">Stuttgart</text><path d="M365 359.5 L375 360 L379 365 L381 372 L387 379 L389 386 L384 390.5 L379.5 396 L378 404 L369 407.5 L360 405.5 L357.5 396 L352.5 388.5 L347.5 380 L346.5 372 L350.5 365 L357 361 Z" fill="#c4c4c4" stroke="#b0b0b0" stroke-width="0.8"/><g fill="none" stroke="#acacac" stroke-width="0.7"><circle cx="366.1" cy="385.6" r="3.2"/><circle cx="368.3" cy="386.8" r="3.2"/><circle cx="355.4" cy="383.5" r="3.2"/><circle cx="373.2" cy="395.9" r="3.2"/><circle cx="351.8" cy="374.3" r="3.2"/><circle cx="374.2" cy="388.1" r="3.2"/><circle cx="369.1" cy="363.6" r="3.2"/><circle cx="355.6" cy="371.6" r="3.2"/><circle cx="365.6" cy="398.1" r="3.2"/><circle cx="368.8" cy="389.2" r="3.2"/><circle cx="368.0" cy="390.1" r="3.2"/><circle cx="366.3" cy="373.2" r="3.2"/><circle cx="381.6" cy="392.1" r="3.2"/><circle cx="360.6" cy="371.1" r="3.2"/><circle cx="378.7" cy="378.6" r="3.2"/><circle cx="381.9" cy="378.0" r="3.2"/><circle cx="350.9" cy="388.7" r="3.2"/><circle cx="379.1" cy="372.9" r="3.2"/><circle cx="351.5" cy="375.6" r="3.2"/><circle cx="370.4" cy="380.7" r="3.2"/><circle cx="353.2" cy="389.3" r="3.2"/><circle cx="352.7" cy="379.5" r="3.2"/><circle cx="356.5" cy="372.9" r="3.2"/><circle cx="360.2" cy="399.9" r="3.2"/><circle cx="356.4" cy="378.3" r="3.2"/><circle cx="382.2" cy="389.2" r="3.2"/><circle cx="356.5" cy="372.4" r="3.2"/><circle cx="378.9" cy="375.5" r="3.2"/><circle cx="351.6" cy="386.6" r="3.2"/><circle cx="357.7" cy="387.5" r="3.2"/><circle cx="362.9" cy="380.9" r="3.2"/><circle cx="371.0" cy="399.1" r="3.2"/><circle cx="358.0" cy="369.4" r="3.2"/><circle cx="383.3" cy="387.6" r="3.2"/><circle cx="364.9" cy="365.6" r="3.2"/><circle cx="371.9" cy="373.9" r="3.2"/><circle cx="370.4" cy="398.5" r="3.2"/><circle cx="372.6" cy="373.3" r="3.2"/><circle cx="365.8" cy="363.7" r="3.2"/><circle cx="355.1" cy="377.2" r="3.2"/><circle cx="370.9" cy="366.8" r="3.2"/><circle cx="362.5" cy="400.2" r="3.2"/><circle cx="375.6" cy="386.7" r="3.2"/><circle cx="367.3" cy="393.1" r="3.2"/><circle cx="351.0" cy="385.0" r="3.2"/><circle cx="377.5" cy="392.0" r="3.2"/><circle cx="362.1" cy="391.1" r="3.2"/><circle cx="364.7" cy="395.8" r="3.2"/><circle cx="382.5" cy="386.2" r="3.2"/><circle cx="373.0" cy="377.8" r="3.2"/><circle cx="371.3" cy="387.8" r="3.2"/><circle cx="351.2" cy="389.1" r="3.2"/><circle cx="377.1" cy="378.1" r="3.2"/><circle cx="377.4" cy="386.6" r="3.2"/><circle cx="365.6" cy="397.9" r="3.2"/><circle cx="367.2" cy="371.1" r="3.2"/><circle cx="375.9" cy="382.9" r="3.2"/><circle cx="372.6" cy="401.5" r="3.2"/><circle cx="360.0" cy="390.8" r="3.2"/><circle cx="356.1" cy="368.5" r="3.2"/></g><g fill="#d6d6d6" fill-opacity="0.8" stroke="#b0b0b0" stroke-width="0.8"><circle cx="274.7" cy="364.7" r="3.6"/><circle cx="316.6" cy="361.1" r="3.6"/><circle cx="339" cy="377.7" r="3.6"/><circle cx="335.4" cy="382.8" r="3.6"/><circle cx="347.7" cy="386.4" r="3.6"/><circle cx="269.7" cy="399.4" r="3.6"/><circle cx="344.1" cy="400.1" r="3.6"/><circle cx="349.2" cy="405.2" r="3.6"/><circle cx="345.5" cy="411" r="3.6"/><circle cx="395.3" cy="405.7" r="3.6"/><circle cx="392.2" cy="417" r="3.6"/><circle cx="389" cy="373.5" r="3.6"/><circle cx="470.3" cy="411.6" r="3.6"/><circle cx="398" cy="373" r="3.6"/></g><circle cx="382" cy="374.3" r="3.3" fill="#ec7a7a" stroke="#d55" stroke-width="0.6"/><circle cx="385" cy="383.8" r="3.5" fill="#dba4a4" stroke="#b99" stroke-width="0.6"/><circle cx="285.8" cy="481.8" r="3.2" fill="#dcb4b4" stroke="#b99" stroke-width="0.6"/><text x="391" y="498.2" font-size="4.4" font-weight="bold" fill="#1a1a1a" textLength="94" lengthAdjust="spacingAndGlyphs">© 2017 HERE   © 2017 Microsoft Corporation</text><text x="253" y="498.5" font-size="6" fill="#555" font-weight="bold">b</text><text x="259" y="498" font-size="4.5" fill="#888">bing</text></svg><ellipse cx="542.4" cy="72.2" rx="28.2" ry="22.8" fill="none" stroke="#2a9bd8" stroke-width="2.3" transform="rotate(-6 542.4 72.2)"/><path d="M536.5 50 Q562 47.5 569.5 65 Q573 80 558 91 Q550 95.5 540 95" fill="none" stroke="#2a9bd8" stroke-width="3.4" stroke-linecap="round"/><line x1="430" y1="144" x2="506" y2="101" stroke="#2196d6" stroke-width="3.3"/><polygon points="518.5,93.5 500.5,95 508.8,108.5" fill="#2196d6"/></svg>
</body></html>
